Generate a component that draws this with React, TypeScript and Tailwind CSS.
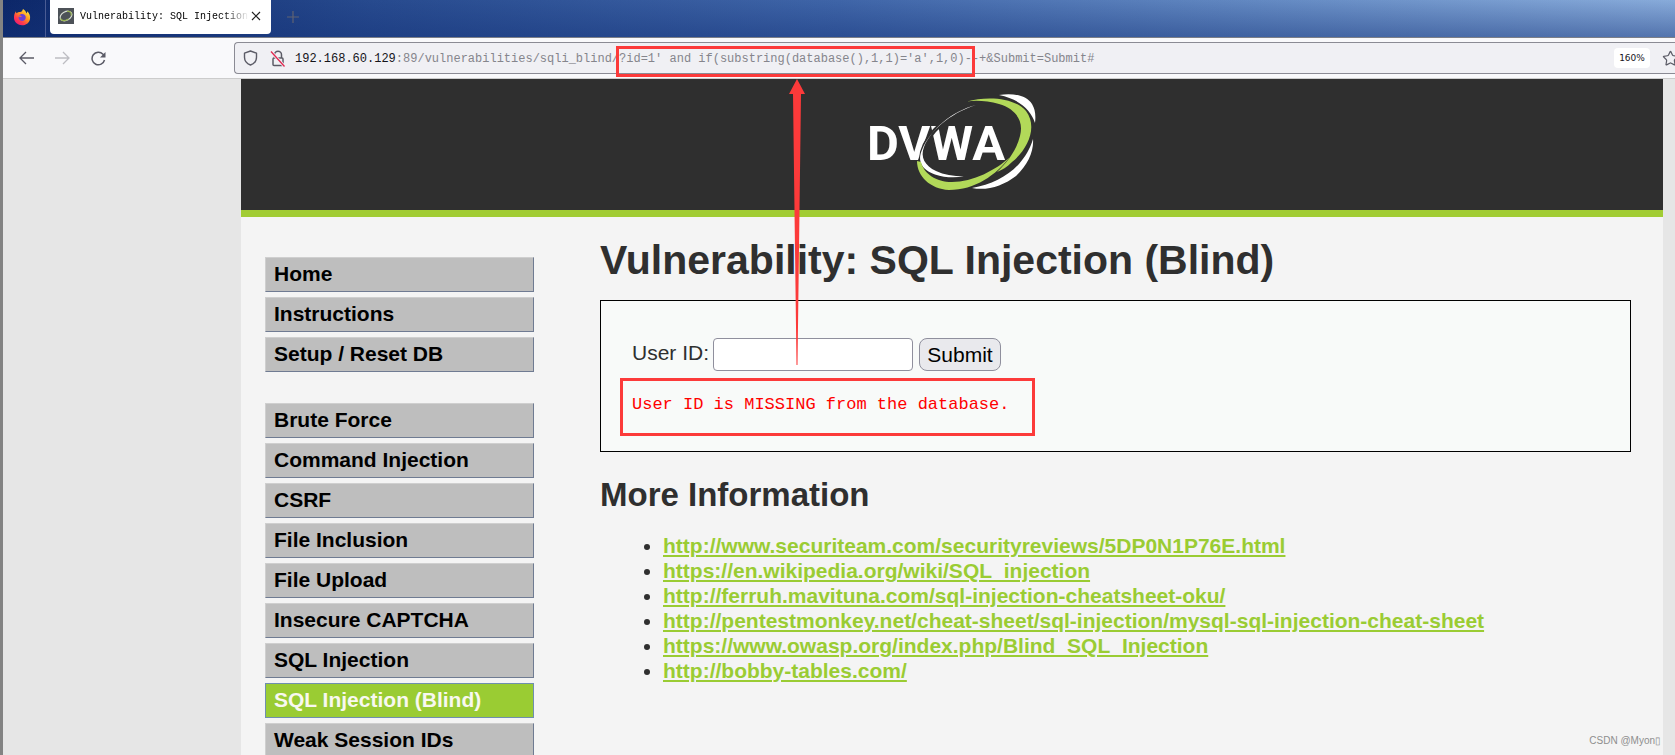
import { Star } from "lucide-react";

const primary = ["Home", "Instructions", "Setup / Reset DB"];
const attacks = [
  "Brute Force",
  "Command Injection",
  "CSRF",
  "File Inclusion",
  "File Upload",
  "Insecure CAPTCHA",
  "SQL Injection",
  "SQL Injection (Blind)",
  "Weak Session IDs",
];
const links = [
  "http://www.securiteam.com/securityreviews/5DP0N1P76E.html",
  "https://en.wikipedia.org/wiki/SQL_injection",
  "http://ferruh.mavituna.com/sql-injection-cheatsheet-oku/",
  "http://pentestmonkey.net/cheat-sheet/sql-injection/mysql-sql-injection-cheat-sheet",
  "https://www.owasp.org/index.php/Blind_SQL_Injection",
  "http://bobby-tables.com/",
];

function FirefoxLogo() {
  return (
    <svg width="18" height="18" viewBox="0 0 18 18" aria-hidden="true">
      <defs>
        <linearGradient id="fox" x1="0.85" y1="0.1" x2="0.2" y2="0.9">
          <stop offset="0" stopColor="#ffe43a" />
          <stop offset="0.45" stopColor="#ff8a1e" />
          <stop offset="0.75" stopColor="#ff3b4e" />
          <stop offset="1" stopColor="#f0206e" />
        </linearGradient>
      </defs>
      <path
        d="M10 1c2 1 3 3 3.500 4.500.6-.5.7-1.500.5-2.300C16.500 5 17.500 8 17 11c-.8 4-4 6.300-8 6.300S1.300 14.300 1 10.300C.8 7.500 1.600 5 3 3.300c0 .9.200 1.500.6 2C4.200 4.600 5 4.200 6 4c1.500.1 2.500-.3 3-1 .5-.6.800-1.200 1-2z"
        fill="url(#fox)"
      />
      <path d="M6 7.500C7 6 9 5.500 10.500 6.200c2 .8 2.800 3 1.900 4.800-.9 1.700-3.200 2.400-5 1.500-1.500-.8-2.200-2.400-1.700-3.900 1 .6 2.300.6 3.300-.4-.8-.5-2-.8-3-.7z" fill="#6b3fd4" />
    </svg>
  );
}

function PageFavicon() {
  return (
    <svg width="16" height="16" viewBox="0 0 16 16" aria-hidden="true" className="shrink-0">
      <rect width="16" height="16" fill="#4d5258" />
      <ellipse cx="8" cy="8" rx="6.300" ry="4.300" transform="rotate(-28 8 8)" fill="none" stroke="#d9ded6" strokeWidth="1.200" />
      <path d="M2.500 10.500c1 3 5 2.500 8 .5M9 3.500c3-.8 5 1 4 4" fill="none" stroke="#94b04e" strokeWidth="1.200" />
    </svg>
  );
}

function Logo() {
  return (
    <svg width="168" height="98" viewBox="0 0 168 98" role="img" aria-label="DVWA">
      <text x="-1" y="66" fontSize="49" fontWeight="700" fontFamily="Roboto, 'Liberation Sans', sans-serif" fill="#fff">
        DVWA
      </text>
      <path d="M108 11C80 20 60 38 54 58c-2 9 3 18 13 22 8 4 17 4 27 3" fill="none" stroke="#2f2f2f" strokeWidth="4" />
      <path d="M108 11C88 17 64 33 56 53c-4 10 1 19 12 24 8 4 17 5 28 5.500-10 1.500-20 1-29-2C54 76 49 67 54 56 62 36 84 17 108 11z" fill="#fff" />
      <path d="M99 7.500C118 2 146 3 158 17c12 16 2 38-14 51-5 5-10 8-15 10 11-10 20-23 23-36 4-15-4-27-21-32C120 7 108 6 99 7.500z" fill="#b2d959" />
      <path d="M49 67c0 15 13 28 32 29 26 0 47-15 61-33-14 13-37 25-58 25-16 0-28-8-31-20z" fill="#b2d959" />
      <path d="M131 1c14-2 27 0 33 9 3 5 4 11 3 19C163 16 151 5 131 1z" fill="#fff" />
      <path d="M165 45c1 12-5 26-17 37-13 10-29 15-44 12 19-3 36-12 47-24 6-7 11-15 14-25z" fill="#fff" />
    </svg>
  );
}

function MenuBlock({ items }: { items: string[] }) {
  return (
    <ul className="flex flex-col gap-[5px]">
      {items.map((item) => (
        <li key={item}>
          <a
            href="#"
            aria-current={item === "SQL Injection (Blind)" ? "page" : undefined}
            className="block h-[35px] border border-t-[#cfcfcf] border-r-[#6f7b92] border-b-[#6f7b92] border-l-[#cfcfcf] bg-[#bebebe] px-2 text-[21px] leading-[31px] font-bold text-black aria-[current=page]:border-[#6f8fae] aria-[current=page]:bg-[#9acc33] aria-[current=page]:text-[#f8f8f0]"
          >
            {item}
          </a>
        </li>
      ))}
    </ul>
  );
}

export default function App() {
  return (
    <div className="relative flex h-screen flex-col overflow-hidden border-l-3 border-[#838383] bg-[#e6e6e6] font-['Liberation_Sans',Arial,sans-serif] text-[#2f2f2f]">
      <header className="shrink-0">
        <div className="flex h-[38px] items-start border-b border-[#7c7f88] bg-[linear-gradient(to_bottom,transparent,rgba(20,50,120,0.45)),linear-gradient(to_right,#0c2769_0%,#274a8e_22%,#3f65a8_50%,#6389c2_75%,#88abda_100%)]">
          <div className="flex h-[37px] w-[43px] items-center justify-center border-r border-[#4a5c94] pr-1 pb-1">
            <FirefoxLogo />
          </div>
          <div className="ml-1 flex h-[34px] w-[221px] items-center rounded-b bg-white pb-0.5 pl-2">
            <PageFavicon />
            <span className="ml-1.5 w-[169px] mask-r-from-85% font-['Liberation_Mono',monospace] text-[10px] whitespace-nowrap text-black">
              Vulnerability: SQL Injection
            </span>
            <button aria-label="Close tab" className="ml-0.5">
              <svg width="10" height="10" viewBox="0 0 10 10" stroke="#222" strokeWidth="1.200">
                <path d="M1 1l8 8M9 1L1 9" />
              </svg>
            </button>
          </div>
          <button aria-label="New tab" className="mt-[11px] ml-4">
            <svg width="12" height="12" viewBox="0 0 12 12" stroke="#5f6272" strokeWidth="1.200">
              <path d="M6 0v12M0 6h12" />
            </svg>
          </button>
        </div>
        <div className="flex h-[41px] items-center border-b border-[#cccccc] bg-[#f9f9fb] pl-4">
          <div className="flex w-[215px] items-center gap-[21px] text-[#5b5b66]">
            <button aria-label="Back">
              <svg width="15" height="14" viewBox="0 0 15 14" fill="none" stroke="currentColor" strokeWidth="1.300">
                <path d="M15 7H1M7 1L1 7l6 6" />
              </svg>
            </button>
            <button aria-label="Forward" className="text-[#bdbdc2]">
              <svg width="15" height="14" viewBox="0 0 15 14" fill="none" stroke="currentColor" strokeWidth="1.300">
                <path d="M0 7h14M8 1l6 6-6 6" />
              </svg>
            </button>
            <button aria-label="Reload">
              <svg width="15" height="15" viewBox="0 0 15 15" fill="none" stroke="currentColor" strokeWidth="1.500">
                <path d="M13.500 9A6.300 6.300 0 1 1 12 3.200L13.500 5" />
                <path d="M14.500 1v5.500H9z" fill="currentColor" stroke="none" />
              </svg>
            </button>
          </div>
          <div className="flex h-8 flex-1 items-center rounded-l border border-r-0 border-[#8b8b94] bg-[#f0f0f4] pl-2">
            <svg width="15" height="16" viewBox="0 0 15 16" fill="none" stroke="#5b5b66" strokeWidth="1.400" aria-hidden="true">
              <path d="M7.500 1l6 2.200v4C13.500 11 11 13.700 7.500 15 4 13.700 1.500 11 1.500 7.200v-4z" strokeLinejoin="round" />
            </svg>
            <svg width="16" height="17" viewBox="0 0 16 17" fill="none" stroke="#5b5b66" strokeWidth="1.500" className="ml-3" aria-hidden="true">
              <rect x="3" y="8" width="10" height="7.500" rx="1" />
              <path d="M4.500 8V4.800a3.500 3.500 0 0 1 7 0V8" />
              <path d="M1 1.500l13.500 15" stroke="#f0f0f4" strokeWidth="3" />
              <path d="M1 1.500l13.500 15" stroke="#e22850" strokeWidth="1.300" />
            </svg>
            <p className="ml-[9px] flex-1 pt-0.5 font-['Liberation_Mono',monospace] text-[12px] whitespace-pre text-[#85858c]">
              <span className="text-[#15141a]">192.168.60.129</span>
              {":89/vulnerabilities/sqli_blind/?id=1' and if(substring(database(),1,1)='a',1,0)--+&Submit=Submit#"}
            </p>
            <button className="h-5 w-9 rounded-sm bg-white pt-0.5 font-['DejaVu_Sans',sans-serif] text-[9px] text-[#15141a]">160%</button>
            <button aria-label="Bookmark" className="-mr-1 ml-3">
              <Star size={17} strokeWidth={1.7} color="#5b5b66" />
            </button>
          </div>
        </div>
      </header>

      <div className="mr-3 ml-[238px] flex-1 bg-[#f4f4f4]">
        <div className="flex h-[138px] justify-center border-b-[7px] border-[#a1cc33] bg-[#2f2f2f] pt-[15px]">
          <Logo />
        </div>
        <div className="flex pr-8 pl-6">
          <nav className="mt-10 flex w-[269px] shrink-0 flex-col gap-[31px]">
            <MenuBlock items={primary} />
            <MenuBlock items={attacks} />
          </nav>
          <main className="ml-[66px] min-w-0 flex-1 text-[21px]">
            <h1 className="mt-5 text-[41px] leading-[46px] font-bold">Vulnerability: SQL Injection (Blind)</h1>
            <div className="mt-[17px] h-[152px] border border-black bg-[#f8faf9] pt-9 pl-[31px]">
              <form className="flex items-center" onSubmit={(e) => e.preventDefault()}>
                <label htmlFor="user-id" className="mr-1 pb-1">User ID:</label>
                <input id="user-id" type="text" className="h-[33px] w-[200px] rounded border border-[#8f8f9d] bg-white px-1 text-black" />
                <button type="submit" className="ml-1.5 h-[33px] w-[82px] rounded-lg border border-[#8f8f9d] bg-[#e9e9ed] text-black">
                  Submit
                </button>
              </form>
              <p className="mt-5 font-['Liberation_Mono',monospace] text-[17px] leading-6 text-[#ff0000]">
                User ID is MISSING from the database.
              </p>
            </div>
            <h2 className="mt-6 text-[33px] leading-[38px] font-bold">More Information</h2>
            <ul className="mt-[19px] list-disc pl-[63px] leading-[25px]">
              {links.map((link) => (
                <li key={link}>
                  <a href={link} className="font-bold text-[#9acc33] underline">{link}</a>
                </li>
              ))}
            </ul>
          </main>
        </div>
      </div>

      <div className="pointer-events-none absolute top-[46px] left-[613px] h-[31px] w-[359px] border-3 border-[#fc3a3a]" />
      <div className="pointer-events-none absolute top-[378px] left-[617px] h-[58px] w-[415px] border-3 border-[#fc3a3a]" />
      <svg width="16" height="287" viewBox="0 0 16 287" fill="#fc3a3a" aria-hidden="true" className="pointer-events-none absolute top-[79px] left-[786px]">
        <path d="M8 0l8 15h-4L8.500 286h-1L4 15H0z" />
      </svg>
      <p className="absolute right-3.5 bottom-2 text-[10px] leading-3 text-[#8e8e8e]">CSDN @Myon▯</p>
    </div>
  );
}
